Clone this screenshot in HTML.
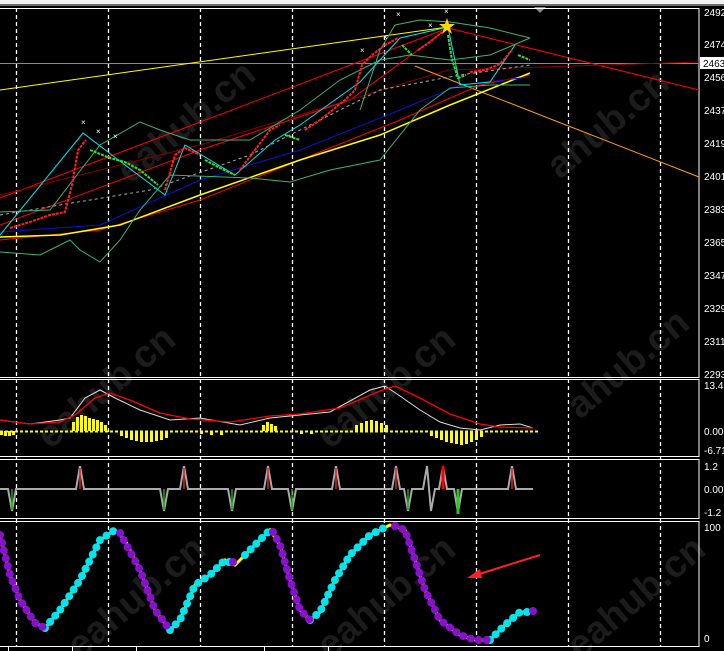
<!DOCTYPE html>
<html><head><meta charset="utf-8"><style>
html,body{margin:0;padding:0;background:#000;width:724px;height:651px;overflow:hidden}
svg{display:block}
text{font-family:"Liberation Sans",sans-serif;font-size:10px;fill:#fff}
.wm{font-size:38px;font-weight:bold;fill:#1c1c1c}
</style></head><body>
<svg width="724" height="651" viewBox="0 0 724 651">
<rect x="0" y="0" width="724" height="651" fill="#000"/>
<rect x="0" y="0" width="724" height="4" fill="#f0f0f0"/>
<rect x="0" y="4" width="724" height="2" fill="#6a6a6a"/>
<polygon points="534,7 546,7 540,13" fill="#888"/>
<g>
<text class="wm" transform="translate(130,185) rotate(-40)">eahub.cn</text>
<text class="wm" transform="translate(560,180) rotate(-40)">ahub.cn</text>
<text class="wm" transform="translate(50,450) rotate(-40)">eahub.cn</text>
<text class="wm" transform="translate(330,450) rotate(-40)">eahub.cn</text>
<text class="wm" transform="translate(580,420) rotate(-40)">ahub.cn</text>
<text class="wm" transform="translate(80,660) rotate(-40)">eahub.cn</text>
<text class="wm" transform="translate(330,660) rotate(-40)">eahub.cn</text>
<text class="wm" transform="translate(580,660) rotate(-40)">eahub.cn</text>
</g>
<g stroke="#fff" stroke-width="1.3" stroke-dasharray="4,3">
<line x1="16.5" y1="8" x2="16.5" y2="646"/><line x1="108.5" y1="8" x2="108.5" y2="646"/>
<line x1="200.5" y1="8" x2="200.5" y2="646"/><line x1="292.5" y1="8" x2="292.5" y2="646"/>
<line x1="384.5" y1="8" x2="384.5" y2="646"/><line x1="476.5" y1="8" x2="476.5" y2="646"/>
<line x1="568.5" y1="8" x2="568.5" y2="646"/><line x1="660.5" y1="8" x2="660.5" y2="646"/>
</g>
<g fill="none" stroke="#fff" stroke-width="1">
<rect x="-1" y="8.5" width="700" height="369"/>
<rect x="-1" y="379.5" width="700" height="77"/>
<rect x="-1" y="459.5" width="700" height="59"/>
<rect x="-1" y="521.5" width="700" height="125"/>
</g>
<line x1="0" y1="63.5" x2="699" y2="63.5" stroke="#8a8a8a"/>
<polyline fill="none" stroke="#ffff00" points="0,90 448,27"/>
<polyline fill="none" stroke="#ff0000" points="0,198 448,28 699,90"/>
<polyline fill="none" stroke="#ff0000" points="0,225 200,150 350,100 448,28"/>
<polyline fill="none" stroke="#8b0000" points="0,195 200,145 448,70 699,62"/>
<polyline fill="none" stroke="#ffa500" points="415,66 699,177"/>
<polyline fill="none" stroke="#ff0000" points="0,240 100,230 200,200 300,160 400,120 480,85 530,75"/>
<polyline fill="none" stroke="#ffff00" stroke-width="1.5" points="0,237 60,235 120,225 200,195 300,160 380,135 450,105 530,73"/>
<polyline fill="none" stroke="#1010cc" points="0,232 100,225 200,180 300,150 400,110 460,85 530,77"/>
<polyline fill="none" stroke="#aaa" stroke-dasharray="3,3" points="0,215 150,190 250,155 380,90 460,75 530,65"/>
<polyline fill="none" stroke="#3cb371" points="0,212 50,210 100,145 140,122 160,130 190,140 250,140 300,110 340,80 380,60 410,55 450,60 490,55 530,38"/>
<polyline fill="none" stroke="#3cb371" points="0,252 40,255 70,240 80,250 100,262 120,240 140,210 170,175 250,178 290,182 330,170 380,160 420,110 450,88 490,85 530,85"/>
<polyline fill="none" stroke="#3cb371" points="360,110 380,50 395,25 420,20 450,22 490,28 530,38"/>
<polyline fill="none" stroke="#00e5ee" points="0,235 83,133 125,165 165,195 185,145 235,175 275,140 300,125 360,82 400,38 448,27 460,85 490,82 515,45"/>
<g stroke-width="2" fill="none" stroke-dasharray="3,1">
<polyline stroke="#ff2020" points="10,228 30,222 50,215 65,212 72,185 78,150 86,140"/>
<polyline stroke="#30e030" points="90,150 110,158 125,162 140,170 158,185"/>
<polyline stroke="#ff2020" points="165,190 175,155 185,148 200,155"/>
<polyline stroke="#30e030" points="205,160 220,168 235,175"/>
<polyline stroke="#ff2020" points="240,170 255,150 270,130 280,125"/>
<polyline stroke="#30e030" points="285,135 300,140"/>
<polyline stroke="#ff2020" points="305,130 320,120 335,108 345,100 355,90 362,65 372,55 385,45 398,38"/>
<polyline stroke="#30e030" points="402,45 412,55"/>
<polyline stroke="#ff2020" points="418,50 430,42 442,32"/>
<polyline stroke="#30e030" points="448,35 452,60 458,78 466,75"/>
<polyline stroke="#ff2020" points="470,72 485,70 500,64 512,50"/>
<polyline stroke="#30e030" points="518,55 530,60"/>
</g>
<g><text x="81" y="125" style="font-size:8px">×</text><text x="96" y="134" style="font-size:8px">×</text><text x="113" y="139" style="font-size:8px">×</text><text x="360" y="53" style="font-size:8px">×</text><text x="383" y="40" style="font-size:8px">×</text><text x="396" y="17" style="font-size:8px">×</text><text x="428" y="28" style="font-size:8px">×</text><text x="444" y="14" style="font-size:8px">×</text></g>
<polygon points="447,18 449,24 455,24 450,28 452,34 447,30 442,34 444,28 439,24 445,24" fill="#ffd700"/>
<g>
<text x="704" y="16">2492</text><text x="704" y="48">2474</text>
<text x="704" y="81">2456</text><text x="704" y="114">2437</text><text x="704" y="147">2419</text>
<text x="704" y="180">2401</text><text x="704" y="213">2383</text><text x="704" y="246">2365</text>
<text x="704" y="279">2347</text><text x="704" y="312">2329</text><text x="704" y="345">2311</text>
<text x="704" y="378">2293</text>
</g>
<rect x="700" y="57" width="24" height="12" fill="#fff"/>
<text x="703" y="67" style="fill:#000">2463</text>
<line x1="0" y1="431.5" x2="540" y2="431.5" stroke="#ffff00" stroke-width="2" stroke-dasharray="3,2"/>
<g fill="#ffff00">
<rect x="72" y="422" width="3" height="9"/><rect x="76" y="417" width="3" height="14"/><rect x="80" y="415" width="3" height="16"/><rect x="84" y="416" width="3" height="15"/><rect x="88" y="418" width="3" height="13"/><rect x="92" y="419" width="3" height="12"/><rect x="96" y="420" width="3" height="11"/><rect x="100" y="422" width="3" height="9"/><rect x="104" y="425" width="3" height="6"/>
<rect x="120" y="431" width="3" height="5"/><rect x="125" y="431" width="3" height="7"/><rect x="130" y="431" width="3" height="9"/><rect x="135" y="431" width="3" height="10"/><rect x="140" y="431" width="3" height="11"/><rect x="145" y="431" width="3" height="11"/><rect x="150" y="431" width="3" height="11"/><rect x="155" y="431" width="3" height="10"/><rect x="160" y="431" width="3" height="9"/><rect x="165" y="431" width="3" height="7"/>
<rect x="262" y="425" width="3" height="6"/><rect x="266" y="422" width="3" height="9"/><rect x="270" y="424" width="3" height="7"/><rect x="274" y="426" width="3" height="5"/>
<rect x="355" y="425" width="3" height="6"/><rect x="360" y="423" width="3" height="8"/><rect x="365" y="421" width="3" height="10"/><rect x="370" y="420" width="3" height="11"/><rect x="375" y="421" width="3" height="10"/><rect x="380" y="423" width="3" height="8"/><rect x="385" y="425" width="3" height="6"/>
<rect x="430" y="431" width="3" height="5"/><rect x="435" y="431" width="3" height="7"/><rect x="440" y="431" width="3" height="9"/><rect x="445" y="431" width="3" height="11"/><rect x="450" y="431" width="3" height="12"/><rect x="455" y="431" width="3" height="13"/><rect x="460" y="431" width="3" height="14"/><rect x="465" y="431" width="3" height="13"/><rect x="470" y="431" width="3" height="11"/><rect x="475" y="431" width="3" height="9"/><rect x="480" y="431" width="3" height="6"/>
<rect x="0" y="431" width="3" height="4"/><rect x="4" y="431" width="3" height="5"/><rect x="8" y="431" width="3" height="5"/><rect x="12" y="431" width="3" height="4"/>
<rect x="200" y="431" width="3" height="3"/><rect x="210" y="431" width="3" height="4"/><rect x="220" y="431" width="3" height="4"/><rect x="300" y="431" width="3" height="3"/><rect x="310" y="431" width="3" height="3"/>
</g>
<polyline fill="none" stroke="#ddd" points="0,420 30,424 60,420 70,418 85,398 100,390 115,398 140,410 170,420 200,418 240,425 270,418 300,415 330,412 370,390 385,386 400,396 420,410 440,422 460,428 480,430 500,425 520,424 533,428"/>
<polyline fill="none" stroke="#ff0000" stroke-width="1.3" points="0,420 30,424 60,422 75,415 95,398 110,393 130,400 160,413 190,419 230,422 270,416 300,414 340,408 380,391 395,386 420,398 450,414 480,424 500,427 533,428"/>
<text x="704" y="389">13.41</text><text x="704" y="435">0.00</text><text x="704" y="454">-6.71</text>
<polyline fill="none" stroke="#aaa" stroke-width="2" points="0,489 8,489 12,511 16,489 76,489 80,466 84,489 160,489 164,511 168,489 180,489 184,466 188,489 228,489 232,511 236,489 264,489 268,466 272,489 288,489 292,511 296,489 332,489 336,466 340,489 392,489 396,466 400,489 404,489 408,511 412,489 423,489 427,466 431,511 435,489 439,489 443,466 447,489 454,489 458,513 462,489 508,489 512,466 516,489 533,489"/>
<g stroke-width="1.5"><line x1="80" y1="468" x2="80" y2="489" stroke="#d22"/><line x1="184" y1="468" x2="184" y2="489" stroke="#d22"/><line x1="268" y1="468" x2="268" y2="489" stroke="#d22"/><line x1="336" y1="468" x2="336" y2="489" stroke="#d22"/><line x1="396" y1="468" x2="396" y2="489" stroke="#d22"/><line x1="443" y1="466" x2="443" y2="489" stroke="#f00" stroke-width="3"/><line x1="512" y1="468" x2="512" y2="489" stroke="#d22"/>
<line x1="12" y1="489" x2="12" y2="510" stroke="#1a1"/><line x1="164" y1="489" x2="164" y2="510" stroke="#1a1"/><line x1="232" y1="489" x2="232" y2="510" stroke="#1a1"/><line x1="292" y1="489" x2="292" y2="510" stroke="#1a1"/><line x1="408" y1="489" x2="408" y2="510" stroke="#1a1"/><line x1="458" y1="489" x2="458" y2="514" stroke="#2c2" stroke-width="3"/></g>
<text x="704" y="470">1.2</text><text x="704" y="493">0.00</text><text x="704" y="516">-1.2</text>
<polyline fill="none" stroke="#ffff00" stroke-width="3" points="0,535 10,575 20,600 35,623 45,628 60,610 80,580 90,560 100,540 115,530 125,540 140,570 155,610 170,630 180,620 195,585 210,575 225,560 235,565 245,555 260,540 270,530 280,545 290,580 300,610 310,620 320,612 335,580 350,555 370,535 390,525 405,530 415,560 425,590 440,620 460,635 475,640 490,640 505,625 520,612 533,612"/>
<g fill="none" stroke-linecap="round" stroke-width="8" stroke-dasharray="0,8">
<polyline stroke="#00e5ee" points="45,628 60,610 80,580 90,560 100,540 115,530"/>
<polyline stroke="#00e5ee" points="170,630 180,620 195,585 210,575 225,560 235,565"/>
<polyline stroke="#00e5ee" points="245,555 260,540 270,530"/>
<polyline stroke="#00e5ee" points="310,620 320,612 335,580 350,555 370,535 390,525"/>
<polyline stroke="#00e5ee" points="490,640 505,625 520,612 530,612"/>
<polyline stroke="#8a10d0" points="0,535 10,575 20,600 35,623 45,628"/>
<polyline stroke="#8a10d0" points="120,533 140,570 155,610 170,630"/>
<polyline stroke="#8a10d0" points="233,562 240,565"/>
<polyline stroke="#8a10d0" points="273,532 280,545 290,580 300,610 310,620"/>
<polyline stroke="#8a10d0" points="395,526 405,530 415,560 425,590 440,620 460,635 475,640 488,640"/>
</g>
<circle cx="533" cy="611" r="4" fill="#8a10d0"/>
<line x1="540" y1="555" x2="476" y2="575" stroke="#ff2020" stroke-width="2"/>
<polygon points="467,578 480,569 482,578" fill="#ff2020"/>
<text x="704" y="531">100</text><text x="704" y="642">0</text>
<g stroke="#fff"><line x1="8.5" y1="646" x2="8.5" y2="651"/><line x1="72.5" y1="646" x2="72.5" y2="651"/><line x1="136.5" y1="646" x2="136.5" y2="651"/><line x1="264.5" y1="646" x2="264.5" y2="651"/><line x1="328.5" y1="646" x2="328.5" y2="651"/></g>
</svg>
</body></html>
